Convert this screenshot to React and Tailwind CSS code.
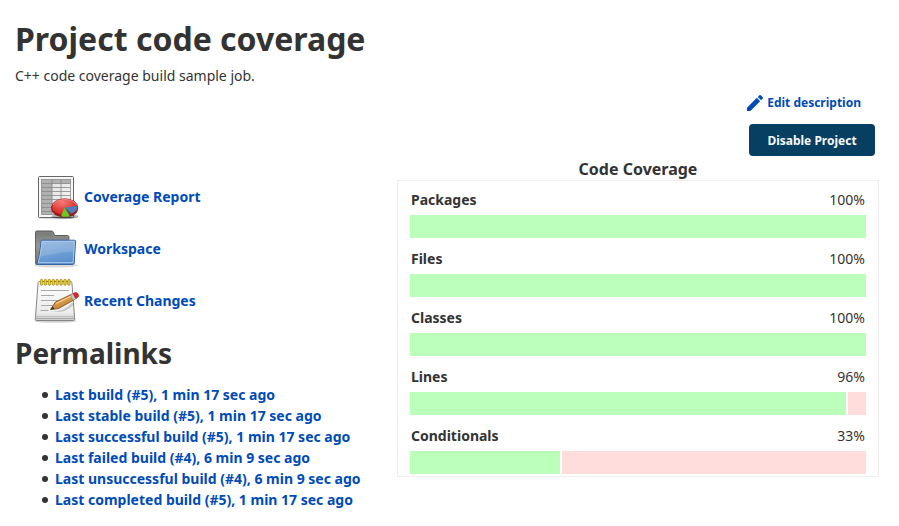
const coverage = [
  { label: 'Packages', percent: 100, hit: 100 },
  { label: 'Files', percent: 100, hit: 100 },
  { label: 'Classes', percent: 100, hit: 100 },
  { label: 'Lines', percent: 96, hit: 95.7 },
  { label: 'Conditionals', percent: 33, hit: 33 },
];

const permalinks = [
  'Last build (#5), 1 min 17 sec ago',
  'Last stable build (#5), 1 min 17 sec ago',
  'Last successful build (#5), 1 min 17 sec ago',
  'Last failed build (#4), 6 min 9 sec ago',
  'Last unsuccessful build (#4), 6 min 9 sec ago',
  'Last completed build (#5), 1 min 17 sec ago',
];

function ReportIcon() {
  return (
    <svg className="size-12" viewBox="0 0 48 48" aria-hidden="true">
      <defs>
        <radialGradient id="pie" cx=".4" cy=".2" r=".8">
          <stop offset="0" stopColor="#f47a74" />
          <stop offset=".6" stopColor="#e23f3c" />
          <stop offset="1" stopColor="#d02222" />
        </radialGradient>
        <linearGradient id="sheet" x1="0" y1="0" x2="1" y2="1">
          <stop offset="0" stopColor="#dcdcdc" />
          <stop offset="1" stopColor="#fafafa" />
        </linearGradient>
      </defs>
      <ellipse cx="24" cy="44.500" rx="20" ry="1.800" fill="#000" opacity=".14" />
      <rect x="6.500" y="3.500" width="35" height="41" rx="1" fill="#f7f7f7" stroke="#666865" />
      <rect x="9.500" y="6.500" width="29" height="35" fill="url(#sheet)" />
      <path d="M9.500 6.500h29v4h-18.500v31h-10.500z" fill="#b0b0b0" />
      <path d="M9.500 10.500h29M9.500 14.500h29M9.500 18.500h29M9.500 22.500h29M9.500 26.500h29M9.500 30.500h29M9.500 34.500h29M9.500 38.500h29M20 6.500v35M29 6.500v35" stroke="#868686" strokeWidth=".8" fill="none" />
      <rect x="9.500" y="6.500" width="29" height="35" fill="none" stroke="#8d8d8d" strokeWidth=".8" />
      <ellipse cx="33" cy="43.500" rx="13.500" ry="2.500" fill="#000" opacity=".3" />
      <path d="M19.700 33.500v2.200c0 5 5.800 8.200 13 8.200s13-3.200 13-8.200v-2.200z" fill="#a3191b" stroke="#761013" strokeWidth=".6" />
      <ellipse cx="32.700" cy="34" rx="12.900" ry="8.200" fill="url(#pie)" stroke="#a3171b" strokeWidth=".8" />
      <path d="M32.600 34.500l12.600-1.800c.7 3.200-1.600 6-5.400 7.700z" fill="#507eb7" />
      <path d="M32.600 34.500l4.600 6.900v2c-2.600.6-5.400.5-7.700 0v-1.800z" fill="#6cc81e" />
      <path d="M32.600 34.500l7.200 5.900-2.600 1z" fill="#574b7c" />
      <path d="M21.200 32c1.500-3.700 6-5.500 11.500-5.500s10 1.800 11.600 5.300" fill="none" stroke="#ffaaa6" strokeWidth=".8" opacity=".7" />
    </svg>
  );
}

function FolderIcon() {
  return (
    <svg className="size-12" viewBox="0 0 48 48" aria-hidden="true">
      <defs>
        <linearGradient id="folderBack" x1="0" y1="0" x2="0" y2="1">
          <stop offset="0" stopColor="#7c7d7c" />
          <stop offset=".45" stopColor="#a5a6a4" />
          <stop offset="1" stopColor="#707170" />
        </linearGradient>
        <linearGradient id="folderFront" x1="0" y1="0" x2=".3" y2="1">
          <stop offset="0" stopColor="#8fb5df" />
          <stop offset=".5" stopColor="#78a5d8" />
          <stop offset="1" stopColor="#5b8fcd" />
        </linearGradient>
      </defs>
      <ellipse cx="24" cy="40.500" rx="22" ry="2" fill="#000" opacity=".14" />
      <path d="M4.500 39.500c-.6 0-.8-.4-.8-1L3.500 7.300c0-.9.600-1.300 1.500-1.300h14.500c1 0 1.400.4 1.800 1.300l1.400 3.200h12.600c1 0 1.600.5 1.600 1.500v27.500z" fill="url(#folderBack)" stroke="#595a59" />
      <path d="M4.500 9h15.500M4.500 11h16.500M4.500 13h31M4.500 15h31M4.500 17h4M4.500 19h4M4.500 21h4M4.500 23h3M4.500 25h3M4.500 27h3M4.500 29h2" stroke="#606160" strokeWidth=".7" opacity=".55" />
      <path d="M9 16c.1-.5.500-.8 1-.8h32.700c.6 0 1 .4.900 1l-1.400 21.900c-.1.900-.6 1.400-1.500 1.400H6c-.9 0-1.200-.3-1.100-1 2.300-6.500 3.400-14 4.100-22.500z" fill="url(#folderFront)" stroke="#3465a4" />
      <path d="M10 16.300h32.500l-1.400 21.300H6.200c2.200-6.600 3.100-13.800 3.800-21.300z" fill="none" stroke="#b9d1eb" strokeWidth=".8" />
      <path d="M10.200 16.700h31.800l-.6 10C30 26.500 22 29.500 7.800 31.500c1.400-5.200 2-10 2.400-14.800z" fill="#fff" opacity=".13" />
    </svg>
  );
}

function NotepadIcon() {
  return (
    <svg className="size-12" viewBox="0 0 48 48" aria-hidden="true">
      <defs>
        <linearGradient id="pad" x1="0" y1="0" x2="0" y2="1">
          <stop offset="0" stopColor="#fff" />
          <stop offset=".8" stopColor="#ececec" />
          <stop offset="1" stopColor="#c9c9c9" />
        </linearGradient>
        <linearGradient id="wood" x1="0" y1="0" x2=".5" y2="1">
          <stop offset="0" stopColor="#f5c47c" />
          <stop offset="1" stopColor="#c07a2a" />
        </linearGradient>
      </defs>
      <ellipse cx="23.500" cy="44" rx="21" ry="1.800" fill="#000" opacity=".18" />
      <path d="M7.500 4.500h31c.9 0 1.300.4 1.400 1.300l2.800 36c.1 1.100-.4 1.700-1.400 1.700H4.500c-1 0-1.300-.6-1.200-1.600L6.100 5.800c.1-.9.500-1.300 1.400-1.300z" fill="url(#pad)" stroke="#858683" />
      <path d="M3.500 39.700l39.200 0" stroke="#b5b6b3" strokeWidth=".8" />
      <path d="M3.400 41.500h39.500" stroke="#a4a5a2" strokeWidth=".8" />
      <path d="M9 13.500h28M9 18.500h13M9 23.500h22M9 28.500h14M8.500 33.500h8" stroke="#a8a8a8" strokeWidth="1" />
      <g stroke="#766000" strokeWidth=".5" fill="#efce20">
        <rect x="8.300" y="2.300" width="2.500" height="6" rx="1.200" />
        <rect x="12.200" y="2.300" width="2.500" height="6" rx="1.200" />
        <rect x="16.100" y="2.300" width="2.500" height="6" rx="1.200" />
        <rect x="20" y="2.300" width="2.500" height="6" rx="1.200" />
        <rect x="23.900" y="2.300" width="2.500" height="6" rx="1.200" />
        <rect x="27.800" y="2.300" width="2.500" height="6" rx="1.200" />
        <rect x="31.700" y="2.300" width="2.500" height="6" rx="1.200" />
        <rect x="35.600" y="2.300" width="2.500" height="6" rx="1.200" />
      </g>
      <path d="M19 34c8 1.500 15-2 21-8l2 1c-5 6-13 10-23 7z" fill="#000" opacity=".16" />
      <path d="M18.500 32.600l5-7.600L39.500 17.300l2.700 5.400-15.800 8.900z" fill="url(#wood)" stroke="#7d4712" strokeWidth=".8" />
      <path d="M24.500 26.300l15-7.300" stroke="#ffdfa8" strokeWidth="1" />
      <path d="M18.500 32.600l2.200-3.300 1.700 2.700z" fill="#393531" />
      <path d="M38.500 17.800l2.700-1.300 2.700 5.200-2.800 1.600z" fill="#c9cac7" stroke="#777" strokeWidth=".5" />
      <path d="M41.200 16.500l2-.9c1.500-.4 2.800.8 3.300 2.300.3 1 .1 1.700-.6 2.200l-2 1.600z" fill="#df2525" stroke="#9c1717" strokeWidth=".6" />
    </svg>
  );
}

const shortcuts = [
  { label: 'Coverage Report', Icon: ReportIcon },
  { label: 'Workspace', Icon: FolderIcon },
  { label: 'Recent Changes', Icon: NotepadIcon },
];

function CoverageRow({ label, percent, hit }) {
  return (
    <div>
      <div className="flex justify-between px-px pb-[5px] leading-[21px]">
        <span className="font-bold">{label}</span>
        <span>{percent}%</span>
      </div>
      <div className="flex h-[23px] gap-0.5" role="img" aria-label={`${label}: ${percent}%`}>
        <div className="shrink-0 bg-[#bbffbb]" style={{ width: `${hit}%` }} />
        {hit < 100 && <div className="flex-1 bg-[#ffdddd]" />}
      </div>
    </div>
  );
}

export default function App() {
  return (
    <main className="bg-white px-[15px] pt-[19px] font-['Noto_Sans',sans-serif] text-sm text-[#333333]">
      <h1 className="text-[32px] leading-10 font-bold">Project code coverage</h1>
      <p className="mt-[5px] leading-6">C++ code coverage build sample job.</p>

      <div className="mt-[5px] flex flex-col items-end gap-[11px] pr-[9px] text-xs font-bold">
        <a href="#edit" className="mr-3.5 flex h-5 items-center gap-1 text-[#004bb8]">
          <svg className="size-4" viewBox="3 3 18 18" fill="currentColor" aria-hidden="true">
            <path d="M3 17.250V21h3.750L17.810 9.940l-3.750-3.750L3 17.250zM20.710 7.040a1 1 0 0 0 0-1.410l-2.340-2.340a1 1 0 0 0-1.410 0l-1.830 1.830 3.750 3.750 1.830-1.830z" />
          </svg>
          Edit description
        </a>
        <button type="button" className="h-8 w-[126px] rounded bg-[#063f62] pt-0.5 text-[#f8f8f8]">
          Disable Project
        </button>
      </div>

      <div className="flex items-start justify-between">
        <div className="pt-[15px]">
          <nav className="pl-[17px]">
            {shortcuts.map(({ label, Icon }) => (
              <a key={label} href="#open" className="flex h-[52px] items-center gap-1 font-bold text-[#004bb8]">
                <Icon />
                {label}
              </a>
            ))}
          </nav>
          <h2 className="mt-2 text-[28px] leading-9 font-bold">Permalinks</h2>
          <ul className="mt-[13px] pl-[27px] font-bold">
            {permalinks.map((text) => (
              <li
                key={text}
                className="flex items-center gap-[7px] leading-[21px] before:size-1.5 before:rounded-full before:bg-[#333333]"
              >
                <a href="#build" className="text-[#004bb8]">{text}</a>
              </li>
            ))}
          </ul>
        </div>

        <section className="mr-[5px] w-[482px] pt-0.5">
          <h3 className="text-center text-base leading-[22px] font-bold">Code Coverage</h3>
          <div className="flex flex-col gap-2.5 border border-[#eeeeee] px-3 pt-2 pb-0.5">
            {coverage.map((row) => (
              <CoverageRow key={row.label} {...row} />
            ))}
          </div>
        </section>
      </div>
    </main>
  );
}
